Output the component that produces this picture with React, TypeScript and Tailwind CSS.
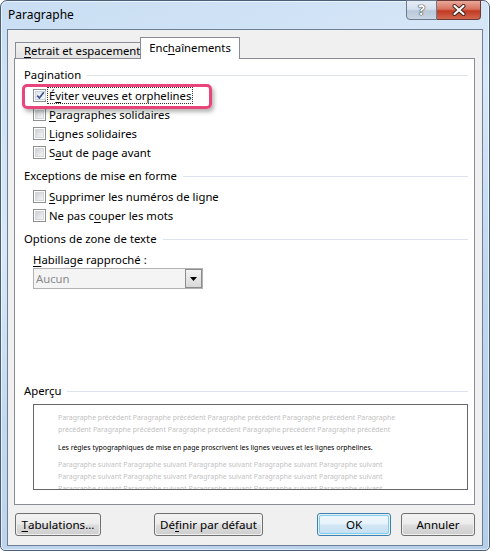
import React from 'react';

const font = "font-['Noto_Sans','Open_Sans',sans-serif]";

function Key({ pre = '', k, post = '' }: { pre?: string; k: string; post?: string }) {
  return (
    <>
      {pre}
      <span className="underline underline-offset-2 decoration-1">{k}</span>
      {post}
    </>
  );
}

function CheckBox({ checked }: { checked?: boolean }) {
  return (
    <span className="w-[13px] h-[13px] shrink-0 border border-[#8e8f8f] bg-white p-px flex">
      <span
        className={`flex-1 flex items-center justify-center border ${
          checked
            ? 'border-[#c9d2e0] bg-gradient-to-br from-[#dfe5ee] to-[#f8f9fb]'
            : 'border-[#d3d6da] bg-gradient-to-br from-[#cdd0d4] to-[#f6f6f6]'
        }`}
      >
        {checked && (
          <svg width="9" height="9" viewBox="0 0 9 9">
            <path d="M1.2 4.6 L3.4 7 L7.8 1.2" fill="none" stroke="#3b4f8c" strokeWidth="1.6" />
          </svg>
        )}
      </span>
    </span>
  );
}

function Row({ children, checked, focus }: { children: React.ReactNode; checked?: boolean; focus?: boolean }) {
  return (
    <div className="h-[19px] flex items-center pl-[18px] gap-px">
      <CheckBox checked={checked} />
      <span
        className={`leading-[15px] px-px border border-dotted ${focus ? 'border-[#333]' : 'border-transparent'}`}
      >
        {children}
      </span>
    </div>
  );
}

function Section({ title, className = '' }: { title: string; className?: string }) {
  return (
    <div className={`h-[16px] flex items-center gap-[6px] pl-[9px] pr-[6px] ${className}`}>
      <span className="leading-[16px]">{title}</span>
      <span className="flex-1 h-px bg-[#dce3ec]" />
    </div>
  );
}

function Btn({ children, primary, w }: { children: React.ReactNode; primary?: boolean; w: string }) {
  return (
    <div
      className={`${w} h-[23px] rounded-[3px] border p-px ${
        primary ? 'border-[#3c7fb1]' : 'border-[#707070]'
      }`}
    >
      <div
        className={`h-full rounded-[2px] flex items-center justify-center leading-none ${
          primary
            ? 'border border-[#7ad0f3] bg-[linear-gradient(#eef7fc_0%,#e6f2fa_48%,#d2e7f5_52%,#c7e0f2_100%)]'
            : 'bg-[linear-gradient(#f2f2f2_0%,#ebebeb_48%,#dddddd_52%,#cfcfcf_100%)]'
        }`}
      >
        {children}
      </div>
    </div>
  );
}

const prev = 'Paragraphe précédent Paragraphe précédent Paragraphe précédent Paragraphe précédent Paragraphe';
const prev2 = 'précédent Paragraphe précédent Paragraphe précédent Paragraphe précédent Paragraphe précédent';
const next = 'Paragraphe suivant Paragraphe suivant Paragraphe suivant Paragraphe suivant Paragraphe suivant';

export default function App() {
  return (
    <div className={`w-[490px] h-[551px] bg-white overflow-hidden text-[11.3px] whitespace-nowrap text-black ${font}`}>
      <div className="w-full h-full flex flex-col px-[6px] pb-[4px] rounded-t-[7px] rounded-b-[5px] border border-[#4a6078] bg-[linear-gradient(160deg,#c9def3_0%,#d8e8f8_35%,#c2d8ef_60%,#b6cfe9_100%)] shadow-[inset_0_0_0_1px_rgba(255,255,255,0.6)]">
        {/* title bar */}
        <div className="h-[28px] flex items-start justify-between">
          <span className="ml-px mt-[6px] leading-[16px] text-[12px]">Paragraphe</span>
          <div className="flex -mt-px mr-[2px]">
            <div className="w-[31px] h-[20px] rounded-bl-[4px] border border-[#6b7a8d] bg-[linear-gradient(#e4ecf5_0%,#d6e1ee_45%,#b9c8da_55%,#c9d6e5_100%)] flex items-center justify-center">
              <span className="font-bold text-[14px] leading-none text-white [text-shadow:0_0_1px_#333,0_0_1px_#333,0_0_1px_#333]">?</span>
            </div>
            <div className="w-[44px] h-[20px] rounded-br-[4px] border border-l-0 border-[#6b3a34] bg-[linear-gradient(#eaa89a_0%,#d8735f_45%,#c23a22_55%,#d2664e_100%)] flex items-center justify-center">
              <svg width="14" height="12" viewBox="0 0 14 12">
                <path d="M2.5 2 L11.5 10 M11.5 2 L2.5 10" stroke="#3d1f1a" strokeWidth="4" strokeLinecap="round" />
                <path d="M2.5 2 L11.5 10 M11.5 2 L2.5 10" stroke="#ffffff" strokeWidth="2.2" strokeLinecap="round" />
              </svg>
            </div>
          </div>
        </div>

        {/* client area */}
        <div className="flex-1 flex flex-col border border-[#6d7f95] bg-[#f0f0f0] pt-[7px] pl-[6px] pr-[7px] pb-[9px]">
          {/* tabs */}
          <div className="h-[21px] flex items-end relative z-10 pl-[1px]">
            <div className="w-[126px] h-[16px] border border-b-0 border-[#898c95] bg-[linear-gradient(#f2f2f2,#e3e3e3)] pl-[8px] leading-[15px]">
              <Key k="R" post="etrait et espacement" />
            </div>
            <div className="-ml-px w-[100px] h-[22px] -mb-px border border-b-0 border-[#898c95] bg-white flex items-start justify-center pt-[2px] leading-[15px]">
              <Key pre="Enc" k="h" post="aînements" />
            </div>
          </div>

          {/* panel */}
          <div className="flex-1 flex flex-col border border-[#898c95] bg-white pt-[8px] pb-[14px]">
            <Section title="Pagination" />
            <div className="mt-[3px] relative">
              <span className="absolute left-[7px] -top-[2px] w-[190px] h-[25px] rounded-[5px] border-[3px] border-[#e8457a] shadow-[2px_3px_4px_rgba(0,0,0,0.3)]" />
              <Row checked focus>
                <Key pre="É" k="v" post="iter veuves et orphelines" />
              </Row>
            </div>
            <Row>
              <Key k="P" post="aragraphes solidaires" />
            </Row>
            <Row>
              <Key k="L" post="ignes solidaires" />
            </Row>
            <Row>
              <Key pre="S" k="a" post="ut de page avant" />
            </Row>

            <Section title="Exceptions de mise en forme" className="mt-[6px]" />
            <div className="mt-[3px]">
              <Row>
                <Key k="S" post="upprimer les numéros de ligne" />
              </Row>
              <Row>
                <Key pre="Ne pas c" k="o" post="uper les mots" />
              </Row>
            </div>

            <Section title="Options de zone de texte" className="mt-[6px]" />
            <div className="mt-[5px] pl-[18px] h-[16px] leading-[16px]">
              <Key k="H" post="abillage rapproché :" />
            </div>
            <div className="ml-[18px] w-[170px] h-[21px] border border-[#b3b3b3] bg-[#f4f4f4] flex">
              <span className="flex-1 pl-[2px] leading-[19px] text-[#8a8a8a]">Aucun</span>
              <span className="w-[17px] h-full border border-[#8c8c8c] bg-[linear-gradient(#f3f3f3,#d9d9d9)] flex items-center justify-center">
                <svg width="7" height="4" viewBox="0 0 7 4">
                  <path d="M0 0 H7 L3.5 4 Z" fill="#000" />
                </svg>
              </span>
            </div>

            <div className="flex-1" />

            <Section title="Aperçu" />
            <div className="mt-[5px] ml-[18px] mr-[6px] h-[86px] border border-[#666] overflow-hidden pl-[24px] pt-[7px] text-[6.95px] leading-[12px]">
              <div className="text-[#c2c2c2]">{prev}</div>
              <div className="text-[#c2c2c2]">{prev2}</div>
              <div className="mt-[6px]">Les règles typographiques de mise en page proscrivent les lignes veuves et les lignes orphelines.</div>
              <div className="mt-[5px] text-[#c2c2c2]">{next}</div>
              <div className="text-[#c2c2c2]">{next}</div>
              <div className="text-[#c2c2c2]">{next}</div>
            </div>
          </div>

          {/* buttons */}
          <div className="mt-[8px] flex items-center text-[11.6px]">
            <Btn w="w-[86px] ml-px">
              <Key k="T" post="abulations..." />
            </Btn>
            <Btn w="w-[109px] ml-[53px]">
              <Key pre="Dé" k="f" post="inir par défaut" />
            </Btn>
            <Btn w="w-[74px] ml-auto" primary>
              OK
            </Btn>
            <Btn w="w-[74px] ml-[10px]">Annuler</Btn>
          </div>
        </div>
      </div>
    </div>
  );
}
